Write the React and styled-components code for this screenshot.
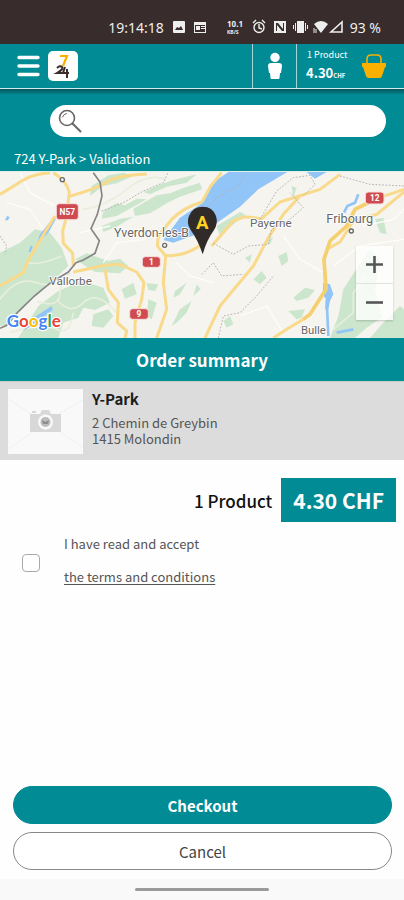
import React, { useState } from "react";
import styled, { createGlobalStyle } from "styled-components";

const teal = "#008b95";
const dark = "#382d2c";
const orange = "#fbb000";

const GlobalStyle = createGlobalStyle`
  * {
    box-sizing: border-box;
  }

  body {
    margin: 0;
    background: #fefefe;
    color: #555;
    font-family: "Noto Sans CJK SC", "Noto Sans", sans-serif;
    font-size: 13px;
  }

  button, input {
    font-family: inherit;
  }
`;

const Page = styled.div`
  display: flex;
  flex-direction: column;
  min-height: 100vh;
`;

const StatusBar = styled.div`
  display: flex;
  align-items: center;
  justify-content: flex-end;
  height: 44px;
  padding: 10px 23px 0 0;
  background: ${dark};
  color: #eee;
  font-family: "Noto Sans", sans-serif;
  font-size: 14px;
`;

const StatusIcons = styled.svg`
  width: 186px;
  height: 16px;
`;

const Header = styled.header`
  display: flex;
  align-items: stretch;
  height: 45px;
  border-bottom: 1px solid #d5ecee;
  background: ${teal};
  color: white;
`;

const Brand = styled.div`
  display: flex;
  flex: 1;
  align-items: center;
  gap: 8px;
  padding-left: 17px;
`;

const IconButton = styled.button`
  display: flex;
  align-items: center;
  justify-content: center;
  width: ${props => props.$width || "auto"};
  padding: 0;
  border: none;
  border-left: ${props => props.$divided ? "1px solid #a6d6da" : "none"};
  background: none;
  cursor: pointer;
`;

const CartButton = styled(IconButton)`
  justify-content: space-between;
  padding: 0 17px 0 9px;
  color: white;
  text-align: left;
`;

const CartCount = styled.div`
  padding-left: 1px;
  font-size: 9px;
  line-height: 16px;
`;

const CartTotal = styled.div`
  font-size: 13px;
  font-weight: 700;
  line-height: 20px;

  small {
    font-size: 6px;
  }
`;

const SearchArea = styled.div`
  padding: 16px 18px 0 50px;
  background: linear-gradient(#04545a, ${teal} 6px);
`;

const SearchBox = styled.label`
  display: flex;
  align-items: center;
  height: 32px;
  padding: 0 8px;
  border-radius: 16px;
  background: white;
`;

const SearchInput = styled.input`
  flex: 1;
  min-width: 0;
  border: none;
  outline: none;
  background: none;
  font-size: 14px;
`;

const Breadcrumb = styled.nav`
  padding: 12px 14px 2px;
  background: ${teal};
  color: white;
  font-size: 13px;
  line-height: 20px;
`;

const MapArea = styled.section`
  position: relative;
  height: 167px;
  border-top: 1px solid #e3efe9;
`;

const MapDrawing = styled.svg`
  display: block;
  width: 100%;
  height: 100%;
  font-family: Roboto, sans-serif;
`;

const ZoomControls = styled.div`
  position: absolute;
  right: 11px;
  bottom: 18px;
  display: flex;
  flex-direction: column;
  width: 37px;
  background: rgba(255, 255, 255, 0.8);
  box-shadow: 0 1px 2px rgba(0, 0, 0, 0.2);
`;

const ZoomButton = styled.button`
  display: flex;
  align-items: center;
  justify-content: center;
  height: 37px;
  padding: 0;
  border: none;
  background: none;
  cursor: pointer;

  & + & {
    border-top: 1px solid #dde5dc;
  }
`;

const SectionTitle = styled.h1`
  margin: 0;
  background: ${teal};
  color: white;
  font-size: 17px;
  font-weight: 700;
  line-height: 43px;
  text-align: center;
`;

const ShopCard = styled.section`
  display: flex;
  gap: 9px;
  height: 79px;
  padding: 7px 8px;
  border-top: 1px solid #c4cccc;
  background: #dcdcdc;
`;

const Thumbnail = styled.svg`
  width: 75px;
  height: 65px;
  background: #f9f9f9;
`;

const ShopName = styled.h2`
  margin: 0 0 6px;
  color: #1c1c1c;
  font-size: 15px;
  font-weight: 700;
  line-height: 20px;
`;

const Address = styled.address`
  font-size: 13px;
  font-style: normal;
  line-height: 16px;
`;

const Total = styled.div`
  display: flex;
  align-items: center;
  justify-content: flex-end;
  gap: 9px;
  padding: 18px 8px 0;
  color: #111;
  font-size: 17px;
  font-weight: 500;
`;

const Price = styled.div`
  padding: 0 12px;
  background: ${teal};
  color: white;
  font-size: 21px;
  font-weight: 700;
  line-height: 44px;
`;

const Terms = styled.div`
  display: flex;
  align-items: center;
  gap: 24px;
  padding: 5px 22px;
  line-height: 33px;
`;

const Checkbox = styled.input`
  appearance: none;
  width: 18px;
  height: 18px;
  margin: 6px 0 0;
  border: 1px solid #aaa;
  border-radius: 4px;
  background: white;

  &:checked {
    background: ${teal};
  }
`;

const TermsText = styled.div`
  display: flex;
  flex-direction: column;
  align-items: flex-start;

  a {
    color: inherit;
    text-underline-offset: 2px;
  }
`;

const Actions = styled.div`
  display: flex;
  flex-direction: column;
  gap: 8px;
  margin-top: auto;
  padding: 0 12px 9px 13px;
`;

const ActionButton = styled.button`
  height: 38px;
  padding: 0;
  border: 1px solid ${props => props.$primary ? teal : "#888"};
  border-radius: 19px;
  background: ${props => props.$primary ? teal : "white"};
  color: ${props => props.$primary ? "white" : "#444"};
  font-size: 15px;
  font-weight: ${props => props.$primary ? 700 : 400};
  cursor: pointer;
`;

const GestureBar = styled.div`
  display: flex;
  justify-content: center;
  height: 21px;
  padding-top: 9px;
  background: #f9f9f9;

  &::after {
    content: "";
    width: 134px;
    height: 3px;
    border-radius: 2px;
    background: #9a9a9a;
  }
`;

const SystemIcons = () => (
  <StatusIcons viewBox="0 0 186 16" fill="#eee" aria-hidden="true">
    <path fillRule="evenodd" d="M10 2h10a1 1 0 0 1 1 1v10a1 1 0 0 1-1 1H10a1 1 0 0 1-1-1V3a1 1 0 0 1 1-1ZM11 11h8l-2-4-2 2-2-1Z" />
    <path fillRule="evenodd" d="M30 3h12v11H30ZM31 6v7h10V6ZM32 7h4v4h-4ZM37 7h4v1h-4ZM37 9h4v1h-4Z" />
    <text x="63" y="8" fontSize="8" fontWeight="700">10.1</text>
    <text x="63" y="15" fontSize="5" fontWeight="700">KB/S</text>
    <g fill="none" stroke="#eee" strokeWidth="1.4">
      <circle cx="95" cy="8.500" r="5" />
      <path d="M95 5v4l3 1M89 4l3-3M101 4l-3-3" />
    </g>
    <path fillRule="evenodd" d="M110 2h12v12h-12ZM112 4v8h1V6l5 6h2V4h-1v6l-5-6Z" />
    <path d="M133 2h7v12h-7ZM131 4h1v8h-1ZM141 4h1v8h-1ZM129 6h1v4h-1ZM143 6h1v4h-1Z" />
    <path d="M150 5q7-6 14 0l-7 9Z" />
    <path d="M150 9v5M152 10v4" stroke="#eee" />
    <path d="M178 3v10h-11Z" fill="none" stroke="#eee" strokeWidth="1.6" />
  </StatusIcons>
);

const Logo = () => (
  <svg width="30" height="30" viewBox="0 0 30 30" role="img" aria-label="724">
    <rect width="30" height="30" rx="5" fill="#fdfdfd" />
    <path d="M12 5h7l-4 10" fill="none" stroke={orange} strokeWidth="2.2" />
    <g fill="none" stroke={dark} strokeWidth="2">
      <path d="M9 17q3-3 5-1t-5 6h5" />
      <path d="M17 16l-2 6h6M19 18v9" />
    </g>
  </svg>
);

const greenAreas = [
  "M0 260L60 230 105 190 150 200 185 245 205 300 150 352 95 400 45 445 20 478 0 480Z",
  "M0 375L60 315 110 300 180 320 150 352 60 430 0 450Z",
  "M115 420L175 375 245 345 310 365 330 410 285 432 250 425 235 455 190 470 175 516 55 516Z",
  "M225 280L260 262 325 285 360 278 385 300 360 322 285 318Z",
  "M65 516L115 465 160 440 190 460 135 516Z",
  "M310 135L350 112 375 118 410 98 440 100 400 122 350 150 305 158Z",
  "M400 128L470 88 510 82 560 62 600 50 606 70 540 92 500 112 450 142 405 150Z",
  "M430 78L475 58 520 42 590 25 560 50 500 62 450 85Z",
  "M305 180L360 158 400 152 350 182 310 198Z",
  "M275 60L325 28 370 20 400 30 350 52 310 60 270 90Z",
  "M990 516L1015 450 1030 370 1075 300 1110 250 1140 275 1125 370 1145 455 1100 485 1065 516Z",
  "M1150 470L1200 420 1212 430 1212 516 1110 516Z",
  "M365 370L400 350 410 385 375 398Z",
  "M440 352L475 355 465 375 445 372Z",
  "M445 400L470 410 455 460 440 450Z",
  "M280 445L325 430 340 450 310 485 275 480Z",
  "M525 375L560 350 540 385 520 395Z",
  "M540 430L575 405 560 440 530 470 515 480Z",
  "M590 355L602 370 580 390Z",
  "M670 465L690 450 700 475 680 485Z",
  "M760 340L785 315 800 335 780 355Z",
  "M835 270L860 258 865 285 845 300Z",
  "M880 395L915 365 945 372 925 395 890 405Z",
  "M865 435L915 430 905 455 890 460Z",
  "M875 60L890 65 880 95Z",
  "M1125 160L1150 155 1160 205 1140 200Z",
  "M790 230L820 212 810 235Z",
  "M735 275L755 265 750 290Z",
  "M650 180L720 138 735 145 660 210Z",
];

const roads = [
  "M0 85Q35 65 65 45T150 20",
  "M160 20Q200 45 208 78L200 150 188 195 190 232 218 262 220 300",
  "M205 92Q290 68 320 48T440 24",
  "M165 150L140 190 80 292 70 320 0 360",
  "M606 108Q550 125 515 160L475 210 472 240 497 270 490 350 500 430 470 516",
  "M497 268Q550 275 606 235",
  "M220 318L315 298 360 295 410 318 432 350 425 400 405 470 405 516",
  "M315 310L325 370 355 410 352 470 380 495 375 516",
  "M606 108L632 60 665 20",
  "M635 240L700 165 735 152 785 158 840 108 960 70 1020 25",
  "M900 90L850 145 805 215 760 300 660 420 615 516",
  "M1212 70L1130 98 1065 130 1040 180 990 225 972 280 978 370 930 445 910 460 860 490 820 516",
  "M1212 78L1130 145 1060 165 1020 228 980 250",
];

const mapLabels = [
  { text: "Yverdon-les-B", x: 342, y: 214, size: 37 },
  { text: "Vallorbe", x: 148, y: 357, size: 35 },
  { text: "Payerne", x: 750, y: 183, size: 35 },
  { text: "Fribourg", x: 979, y: 170, size: 38 },
  { text: "Bulle", x: 903, y: 503, size: 34 },
];

const shields = [
  { text: "N57", x: 169, y: 113, width: 66, height: 48 },
  { text: "1", x: 427, y: 272, width: 54, height: 32 },
  { text: "9", x: 389, y: 428, width: 56, height: 32 },
  { text: "12", x: 1096, y: 78, width: 56, height: 36 },
];

const googleLetters = [
  ["G", "#4285f4"], ["o", "#ea4335"], ["o", "#fbbc05"],
  ["g", "#4285f4"], ["l", "#34a853"], ["e", "#ea4335"],
];

const RegionMap = () => (
  <MapDrawing viewBox="0 18 1212 498" preserveAspectRatio="xMidYMid slice" role="img" aria-label="Map">
    <rect y="18" width="1212" height="498" fill="#f6f4ef" />
    <g fill="#cbe6cd">
      {greenAreas.map(d => <path key={d} d={d} />)}
    </g>
    <g fill="none" stroke="#e7efdc" strokeWidth="5">
      <path d="M75 290Q120 300 185 270M0 400Q50 330 110 350T210 320M110 405Q180 430 180 380T245 350" />
      <path d="M170 400Q210 450 250 410T350 440M30 500Q130 470 170 490T220 440" />
      <path d="M250 130Q320 120 380 70T500 40M1000 490L1060 440 1060 380 1100 330" />
    </g>
    <g fill="none" stroke="#fffdf7" strokeWidth="4">
      <path d="M20 110L90 130 130 190M60 20L90 80 165 120M310 290L350 230 440 220M240 200L330 180" />
      <path d="M850 210L900 280 970 320M1000 300L1080 240 1212 220" />
      <path d="M530 290L570 330 640 350M720 450L800 420 850 500M1090 180L1180 160 1212 130" />
    </g>
    <g fill="#92c5f7">
      <path d="M490 222L540 155 606 112 635 52 685 18 862 18 775 70 720 122 645 175 590 205 520 230Z" />
      <path d="M920 18H980L945 38Z" />
      <path d="M110 235L120 205 160 155 168 158 145 200Z" />
      <path d="M85 258l8-20 5 5-6 15ZM15 163l6-13 8 3-5 10Z" />
      <path d="M70 495L100 455 155 420 158 432 110 468Z" />
      <path d="M970 350L990 355 1000 385 990 405 985 430 975 430 978 400 968 385Z" />
    </g>
    <path d="M980 400L985 510M1032 140L1042 120 1065 110 1075 85M1010 500L1060 490" fill="none" stroke="#92c5f7" strokeWidth="8" />
    <g fill="none" stroke="#f9d98a" strokeWidth="9" strokeLinejoin="round">
      {roads.map(d => <path key={d} d={d} />)}
    </g>
    <path d="M1130 98L1065 130 1040 180 990 225 972 280 978 370 930 445 910 460" fill="none" stroke="#f6d070" strokeWidth="11" strokeLinejoin="round" />
    <g fill="none" stroke="#b3b2b1" strokeWidth="3" strokeDasharray="5 5">
      <path d="M305 135L370 110 430 75 490 50 505 18M0 210L20 240 15 265" />
      <path d="M606 140L650 95 715 60 740 20M780 160L830 75 880 35 930 28 945 55 910 90" />
      <path d="M640 232L700 265 745 240 805 235 815 190 870 160 910 125 870 80M606 325L640 290 665 330 730 325" />
      <path d="M655 516L670 450 720 440 770 390 820 330M1020 30L1110 55 1212 60" />
    </g>
    <path
      d="M280 20L300 48 306 90 292 145 273 188 298 224 285 262 250 282 228 290 205 318 152 350 103 390 52 440 20 478 0 487"
      fill="none"
      stroke="#858585"
      strokeWidth="5"
    />
    <g fill="white" stroke="#666" strokeWidth="4">
      <circle cx="187" cy="41" r="6" />
      <circle cx="494" cy="238" r="6" />
      <circle cx="1054" cy="195" r="6" />
    </g>
    {mapLabels.map(({ text, x, y, size }) => (
      <text key={text} x={x} y={y} fontSize={size} fill="#666" stroke="#fff" strokeWidth="5" paintOrder="stroke">
        {text}
      </text>
    ))}
    {shields.map(({ text, x, y, width, height }) => (
      <g key={text}>
        <rect x={x} y={y} width={width} height={height} rx="9" fill="#cf4b50" stroke="#f6dede" strokeWidth="3" />
        <text x={x + width / 2} y={y + height / 2 + 9} fontSize="25" fontWeight="700" fill="white" textAnchor="middle">
          {text}
        </text>
      </g>
    ))}
    <path d="M608 265Q594 222 572 192Q558 170 567 150Q578 122 608 122Q638 122 648 150Q655 172 642 192Q620 222 608 265Z" fill="#302a28" />
    <text x="607" y="189" fontSize="56" fontWeight="700" fill="#ffd21f" textAnchor="middle">A</text>
    <text x="20" y="483" fontSize="51" fontFamily="Lato, sans-serif" fontWeight="700" stroke="white" strokeWidth="7" paintOrder="stroke">
      {googleLetters.map(([letter, color], i) => <tspan key={i} fill={color}>{letter}</tspan>)}
    </text>
  </MapDrawing>
);

const App = () => {
  const [search, setSearch] = useState("");
  const [accepted, setAccepted] = useState(false);

  return (
    <Page>
      <GlobalStyle />
      <StatusBar>
        <span>19:14:18</span>
        <SystemIcons />
        <span>93 %</span>
      </StatusBar>
      <Header>
        <Brand>
          <IconButton aria-label="Menu">
            <svg width="23" height="22" viewBox="0 0 23 22" stroke="white" strokeWidth="3.4" strokeLinecap="round">
              <path d="M2 2.500h19M2 11h19M2 19.500h19" />
            </svg>
          </IconButton>
          <Logo />
        </Brand>
        <IconButton $divided $width="44px" aria-label="Account">
          <svg width="16" height="28" viewBox="0 0 16 28" fill="white">
            <circle cx="8" cy="5.500" r="4.700" />
            <path d="M4 11h8q3 0 3 3l-1 7h-1l-.5 5q0 1-1 1h-7q-1 0-1-1L3 21H2l-1-7q0-3 3-3Z" />
          </svg>
        </IconButton>
        <CartButton $divided $width="108px">
          <div>
            <CartCount>1 Product</CartCount>
            <CartTotal>4.30<small>CHF</small></CartTotal>
          </div>
          <svg width="26" height="26" viewBox="0 0 26 26" aria-hidden="true">
            <path d="M6 12V6q0-4 4-4h6q4 0 4 4v6" fill="none" stroke={orange} strokeWidth="1.6" />
            <path d="M1 10h24v4h-1l-3 9q-.5 2-2.500 2H7.500Q5.500 25 5 23L2 14H1Z" fill={orange} />
          </svg>
        </CartButton>
      </Header>
      <SearchArea>
        <SearchBox>
          <svg width="24" height="24" viewBox="0 0 24 24" fill="none" stroke="#666" strokeLinecap="round">
            <circle cx="9" cy="9" r="7.500" strokeWidth="1.6" />
            <path d="M4.500 8q1-3 4-3.500" strokeWidth="1" />
            <path d="M14.500 14.500l8 8" strokeWidth="2" />
          </svg>
          <SearchInput aria-label="Search" value={search} onChange={e => setSearch(e.target.value)} />
        </SearchBox>
      </SearchArea>
      <Breadcrumb>724 Y-Park &gt; Validation</Breadcrumb>
      <MapArea>
        <RegionMap />
        <ZoomControls>
          <ZoomButton aria-label="Zoom in">
            <svg width="17" height="17" stroke="#555" strokeWidth="2.6"><path d="M0 8.500h17M8.500 0v17" /></svg>
          </ZoomButton>
          <ZoomButton aria-label="Zoom out">
            <svg width="17" height="17" stroke="#555" strokeWidth="2.6"><path d="M0 8.500h17" /></svg>
          </ZoomButton>
        </ZoomControls>
      </MapArea>
      <SectionTitle>Order summary</SectionTitle>
      <ShopCard>
        <Thumbnail viewBox="0 0 75 65" aria-hidden="true">
          <path d="M0 10L25 26M52 24L75 11M52 43L75 58M25 43L0 60" stroke="#f0f0f0" />
          <path d="M22 25h10l2-4h7l2 4h10v18H22ZM24 22h4v2h-4Z" fill="#d8d8d8" />
          <circle cx="37.500" cy="33" r="7.500" fill="#f9f9f9" />
          <circle cx="37.500" cy="33" r="5" fill="#bcbcbc" />
          <path d="M34 31l3.500 2 3.500-2-1 4h-5Z" fill="#8d8d8d" />
        </Thumbnail>
        <div>
          <ShopName>Y-Park</ShopName>
          <Address>2 Chemin de Greybin<br />1415 Molondin</Address>
        </div>
      </ShopCard>
      <Total>
        <span>1 Product</span>
        <Price>4.30 CHF</Price>
      </Total>
      <Terms>
        <Checkbox
          type="checkbox"
          id="terms"
          checked={accepted}
          onChange={e => setAccepted(e.target.checked)}
        />
        <TermsText>
          <label htmlFor="terms">I have read and accept</label>
          <a href="#terms">the terms and conditions</a>
        </TermsText>
      </Terms>
      <Actions>
        <ActionButton $primary>Checkout</ActionButton>
        <ActionButton>Cancel</ActionButton>
      </Actions>
      <GestureBar />
    </Page>
  );
};

export default App;
